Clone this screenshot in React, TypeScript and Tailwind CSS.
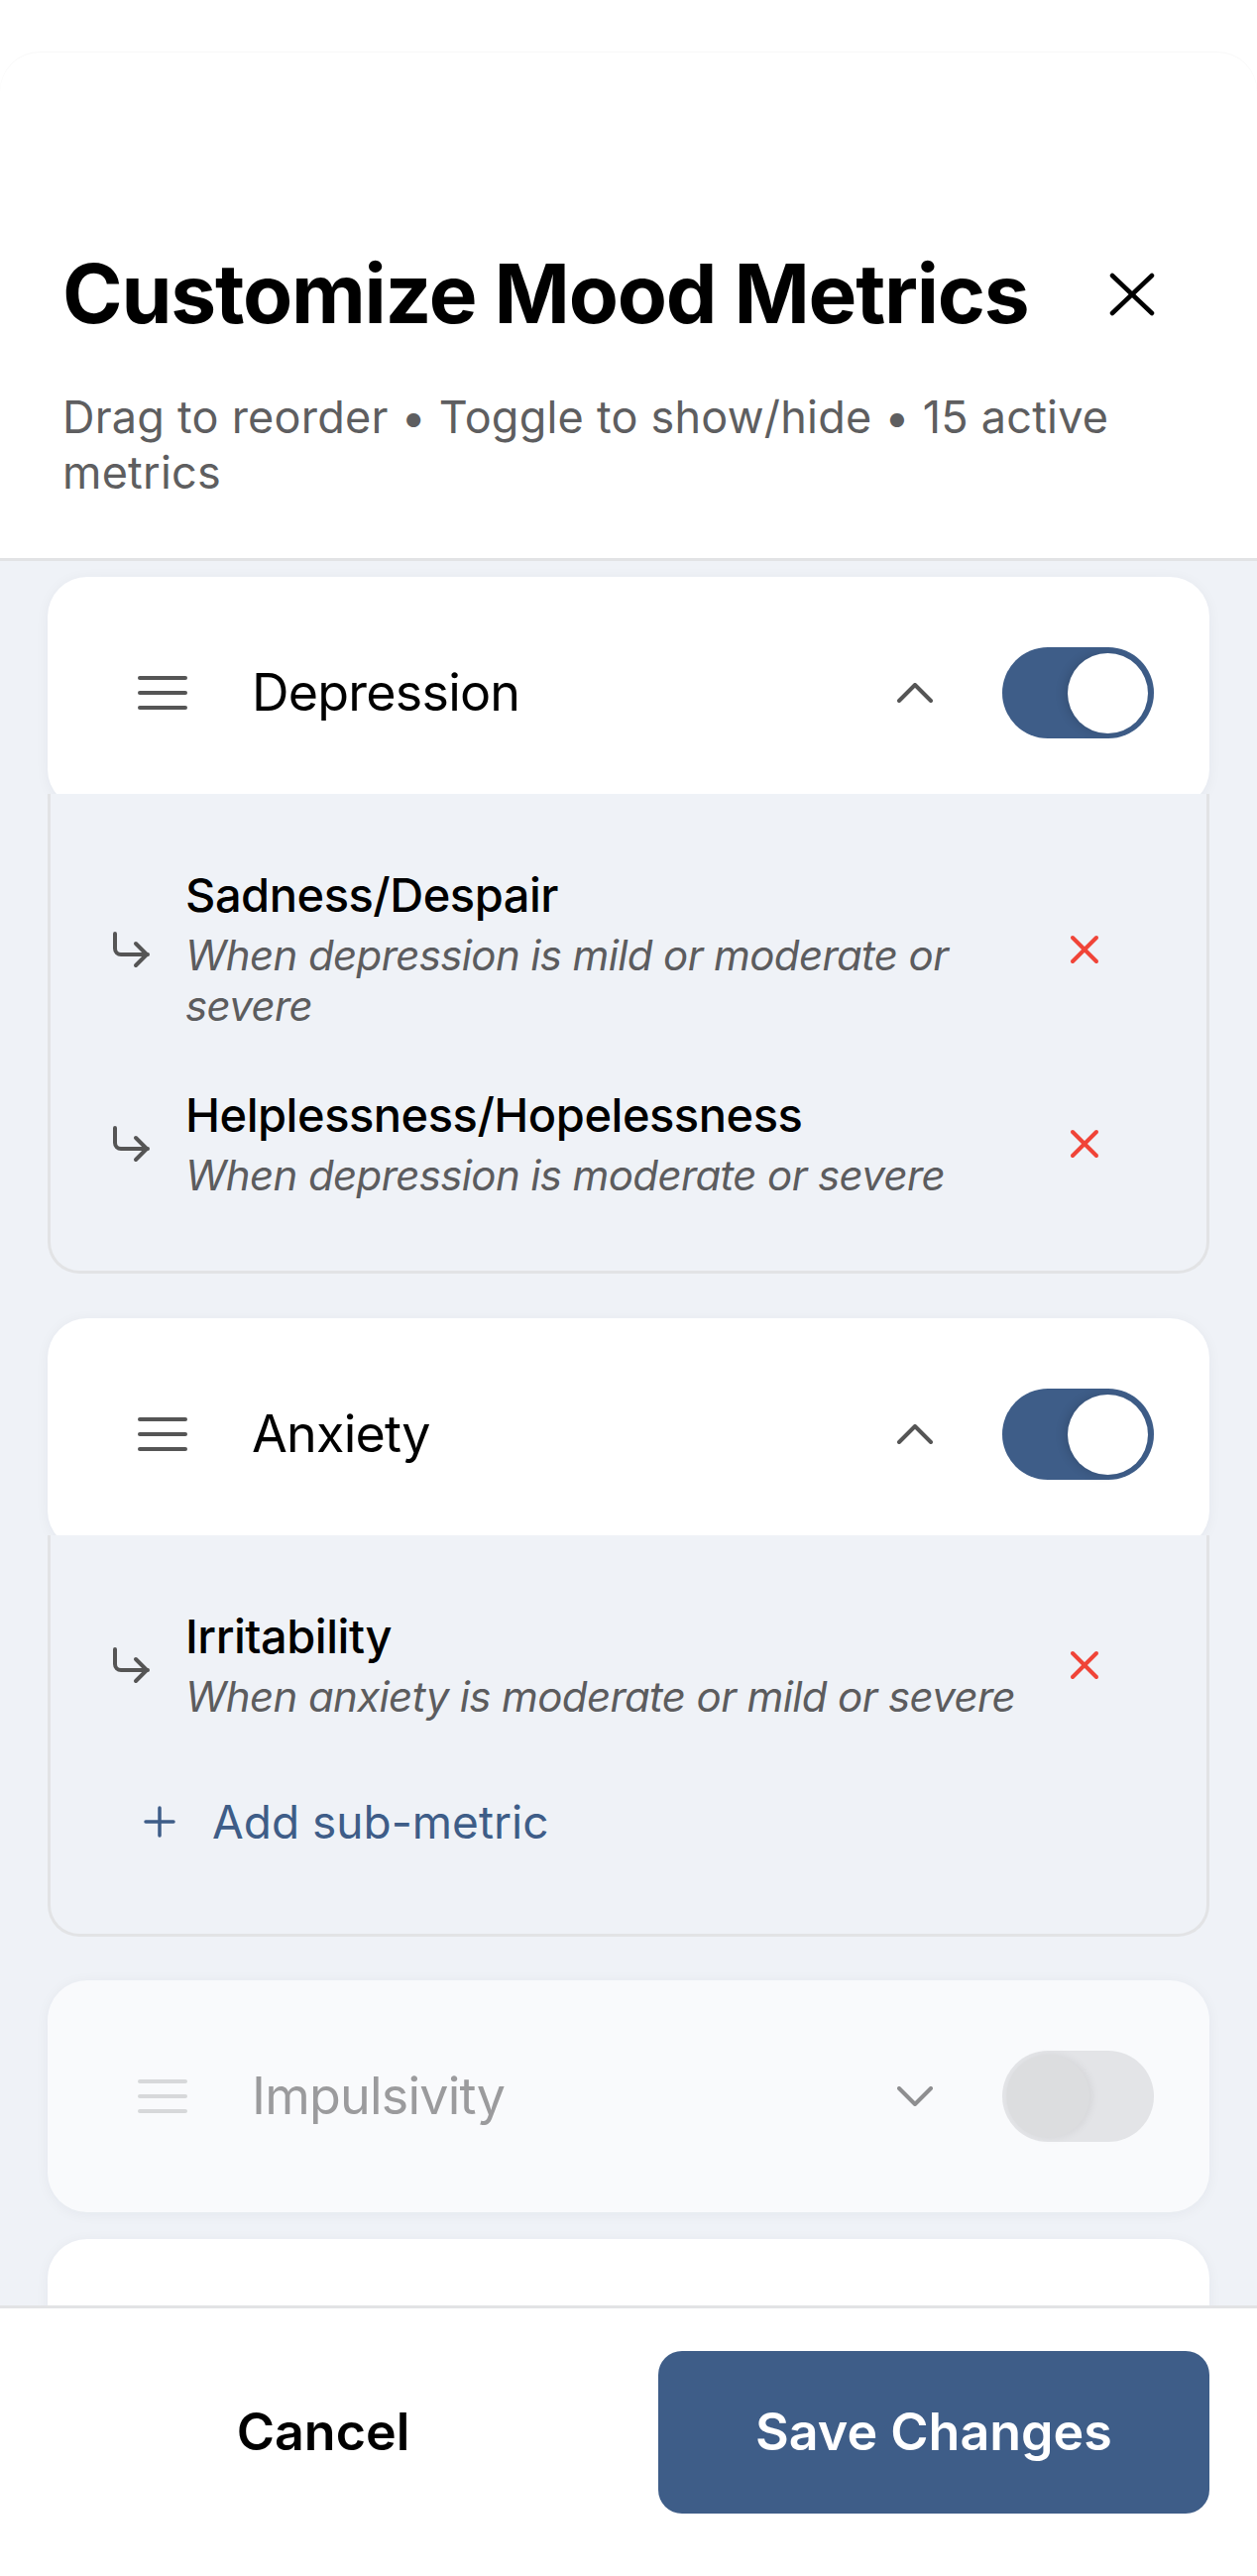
import React from 'react';

const BLUE = '#3e5d88';

function Hamburger({ muted }: { muted?: boolean }) {
  return (
    <svg width="50" height="40" viewBox="0 0 50 40" className="shrink-0">
      <g stroke={muted ? '#d7d8da' : '#555555'} strokeWidth="4" strokeLinecap="round">
        <line x1="2" y1="5" x2="48" y2="5" />
        <line x1="2" y1="20" x2="48" y2="20" />
        <line x1="2" y1="35" x2="48" y2="35" />
      </g>
    </svg>
  );
}

function Chevron({ up, muted }: { up?: boolean; muted?: boolean }) {
  return (
    <svg width="36" height="20" viewBox="0 0 36 20" className="shrink-0">
      <polyline
        points={up ? '2,18 18,2 34,18' : '2,2 18,18 34,2'}
        fill="none"
        stroke={muted ? '#8e8e90' : '#555555'}
        strokeWidth="4"
        strokeLinecap="round"
        strokeLinejoin="round"
      />
    </svg>
  );
}

function Toggle({ on }: { on: boolean }) {
  if (on) {
    return (
      <div className="flex h-[92px] w-[153px] shrink-0 items-center justify-end rounded-full bg-[#3e5d88] px-[6px]">
        <div className="h-[81px] w-[81px] rounded-full bg-white shadow-[-4px_0_10px_rgba(0,0,0,0.12)]" />
      </div>
    );
  }
  return (
    <div className="flex h-[92px] w-[153px] shrink-0 items-center justify-start rounded-full bg-[#e3e4e7] px-[4px]">
      <div className="h-[84px] w-[84px] rounded-full bg-[#dcdddf] shadow-[3px_0_8px_rgba(0,0,0,0.06)]" />
    </div>
  );
}

function SubArrow() {
  return (
    <svg width="40" height="40" viewBox="0 0 40 40" className="shrink-0">
      <g fill="none" stroke="#555555" strokeWidth="4" strokeLinecap="round" strokeLinejoin="round">
        <path d="M4 4 V19 A6 6 0 0 0 10 25 H37" />
        <polyline points="25,14 36,25 25,36" />
      </g>
    </svg>
  );
}

function RedX() {
  return (
    <svg width="30" height="30" viewBox="0 0 30 30" className="ml-[22px] shrink-0">
      <g stroke="#f04438" strokeWidth="4" strokeLinecap="round">
        <line x1="3" y1="3" x2="27" y2="27" />
        <line x1="27" y1="3" x2="3" y2="27" />
      </g>
    </svg>
  );
}

function CardHeader({ name, expanded, enabled }: { name: string; expanded: boolean; enabled: boolean }) {
  return (
    <div
      className={`flex h-[234px] items-center rounded-[40px] pl-[91px] pr-[56px] shadow-[0_2px_14px_rgba(20,30,60,0.05)] ${
        enabled ? 'bg-white' : 'bg-[#f9fafc]'
      }`}
    >
      <Hamburger muted={!enabled} />
      <span
        className={`ml-[65px] flex-1 text-[52px] leading-[60px] tracking-[-0.015em] ${
          enabled ? 'text-black' : 'text-[#9b9b9d]'
        }`}
      >
        {name}
      </span>
      <Chevron up={expanded} muted={!enabled} />
      <div className="ml-[70px]">
        <Toggle on={enabled} />
      </div>
    </div>
  );
}

function SubItem({ title, when }: { title: string; when: string }) {
  return (
    <div className="flex items-center">
      <SubArrow />
      <div className="ml-[35px] flex-1">
        <div className="text-[47px] font-medium leading-[56px] tracking-[-0.01em] text-black">{title}</div>
        <div className="mt-[7px] text-[42px] italic leading-[51px] tracking-[-0.015em] text-[#5c5c5e]">{when}</div>
      </div>
      <RedX />
    </div>
  );
}

export default function App() {
  return (
    <div className="min-h-screen bg-white pt-[53px] font-['Inter','Noto_Sans',sans-serif]">
      <div className="flex h-[2546px] flex-col overflow-hidden rounded-t-[40px] bg-white shadow-[0_-1px_1px_rgba(0,0,0,0.03)]">
        {/* header */}
        <div className="border-b-[3px] border-[#e2e3e5] pl-[63px] pr-[63px] pt-[194px] pb-[58px]">
          <div className="flex items-center">
            <h1 className="flex-1 text-[82px] font-bold leading-[100px] tracking-[-0.015em] text-black">
              Customize Mood Metrics
            </h1>
            <svg width="46" height="44" viewBox="0 0 46 44" className="mr-[40px] shrink-0">
              <g stroke="#000" strokeWidth="4.5" strokeLinecap="round">
                <line x1="3" y1="3" x2="43" y2="41" />
                <line x1="43" y1="3" x2="3" y2="41" />
              </g>
            </svg>
          </div>
          <p className="mt-[46px] text-[45px] leading-[56px] tracking-[0.005em] text-[#5e5e60]">
            Drag to reorder • Toggle to show/hide • 15 active metrics
          </p>
        </div>

        {/* list */}
        <div className="flex-1 overflow-hidden bg-[#eff2f7] px-[48px] pt-[16px]">
          <div>
            <CardHeader name="Depression" expanded enabled />
            <div className="relative -mt-[15px] rounded-b-[32px] border-[3px] border-t-0 border-[#e2e3e5] bg-[#eff2f7] pt-[74px] pb-[71px] pl-[61px] pr-[108px]">
              <div className="flex flex-col gap-[57px]">
                <SubItem title="Sadness/Despair" when="When depression is mild or moderate or severe" />
                <SubItem title="Helplessness/Hopelessness" when="When depression is moderate or severe" />
              </div>
            </div>
          </div>

          <div className="mt-[45px]">
            <CardHeader name="Anxiety" expanded enabled />
            <div className="relative -mt-[15px] rounded-b-[32px] border-[3px] border-t-0 border-[#e2e3e5] bg-[#eff2f7] pt-[74px] pb-[85px] pl-[61px] pr-[108px]">
              <SubItem title="Irritability" when="When anxiety is moderate or mild or severe" />
              <button className="ml-[33px] mt-[73px] flex h-[56px] items-center">
                <svg width="32" height="32" viewBox="0 0 32 32" className="shrink-0">
                  <g stroke={BLUE} strokeWidth="3.5" strokeLinecap="round">
                    <line x1="16" y1="2" x2="16" y2="30" />
                    <line x1="2" y1="16" x2="30" y2="16" />
                  </g>
                </svg>
                <span className="ml-[37px] text-[46px] leading-[56px] text-[#3e5d88]">Add sub-metric</span>
              </button>
            </div>
          </div>

          <div className="mt-[44px]">
            <CardHeader name="Impulsivity" expanded={false} enabled={false} />
          </div>

          <div className="mt-[27px] h-[234px] rounded-[40px] bg-white shadow-[0_2px_14px_rgba(20,30,60,0.05)]" />
        </div>

        {/* footer */}
        <div className="grid grid-cols-2 gap-[60px] border-t-[3px] border-[#e2e3e5] bg-white px-[48px] pt-[43px] pb-[63px]">
          <button className="flex h-[164px] items-center justify-center rounded-[24px] text-[52px] font-semibold text-black">
            Cancel
          </button>
          <button className="flex h-[164px] items-center justify-center rounded-[24px] bg-[#3e5d88] text-[52px] font-semibold text-white">
            Save Changes
          </button>
        </div>
      </div>
    </div>
  );
}
